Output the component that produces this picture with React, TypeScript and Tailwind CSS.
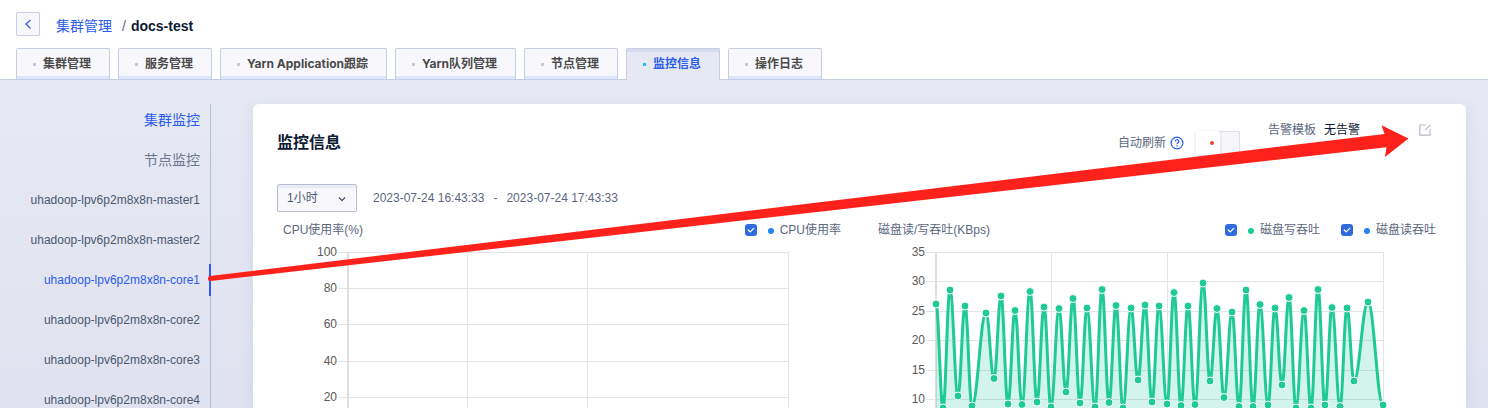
import React from "react";

const tabs = ["集群管理", "服务管理", "Yarn Application跟踪", "Yarn队列管理", "节点管理", "监控信息", "操作日志"];
const activeTab = "监控信息";

const nodes = [
  "uhadoop-lpv6p2m8x8n-master1",
  "uhadoop-lpv6p2m8x8n-master2",
  "uhadoop-lpv6p2m8x8n-core1",
  "uhadoop-lpv6p2m8x8n-core2",
  "uhadoop-lpv6p2m8x8n-core3",
  "uhadoop-lpv6p2m8x8n-core4",
];
const activeNode = "uhadoop-lpv6p2m8x8n-core1";

type Point = [number, number];

const writeSeries: Point[] = [
  [64, 64], [71, 168], [78, 50], [86, 156], [93, 66], [100, 166], [114, 73], [122, 138.5],
  [129, 56], [136, 164], [143, 70.5], [150, 164.5], [158, 51.5], [165, 162], [172, 67], [179, 167],
  [187, 68.5], [194, 152], [201, 58.5], [208, 163], [215, 68], [223, 167], [230, 49.5], [237, 162.5],
  [244, 65.5], [251, 168], [259, 68], [266, 140], [273, 65], [280, 162], [287, 66], [295, 164],
  [302, 52.5], [309, 165.5], [316, 66], [323, 164.5], [331, 43], [338, 141], [345, 68.5], [352, 157.5],
  [360, 72], [367, 166.5], [374, 50], [381, 166.5], [388, 64.5], [396, 165], [403, 68], [410, 145],
  [417, 57.5], [424, 168], [432, 70.5], [439, 168], [446, 49.5], [453, 165], [460, 67.5], [468, 166.5],
  [475, 68], [482, 141], [496, 62], [511, 165],
];

function smooth(points: Point[]) {
  return points
    .map(([x, y], i) => {
      if (i === 0) return `M${x} ${y}`;
      const [px, py] = points[i - 1];
      const d = (x - px) * 0.4;
      return `C${px + d} ${py} ${x - d} ${y} ${x} ${y}`;
    })
    .join(" ");
}

function Legend({ label, dot }: { label: string; dot: string }) {
  return (
    <label className="flex items-center">
      <span className="relative flex h-3 w-3">
        <input type="checkbox" defaultChecked className="h-3 w-3 appearance-none rounded-[3px] bg-[#2f6bdc]" />
        <svg className="pointer-events-none absolute inset-0" width="12" height="12" viewBox="0 0 12 12" fill="none" stroke="#fff" strokeWidth="1.3" strokeLinecap="round" strokeLinejoin="round">
          <path d="M3.2 6 5.2 7.9 8.8 4.4" />
        </svg>
      </span>
      <span className={`ml-[11px] mt-0.5 h-1.5 w-1.5 rounded-full ${dot}`} />
      <span className="ml-1.5">{label}</span>
    </label>
  );
}

function Axis({ ticks, step, left, right, columns }: { ticks: number[]; step: number; left: number; right: number; columns: number[] }) {
  return (
    <g>
      {ticks.map((t, i) => {
        const y = Math.round(12 + i * step) + 0.5;
        return (
          <g key={t}>
            <line x1={left - 9} x2={right} y1={y} y2={y} stroke="#e4e4e4" />
            <text x={left - 10} y={y + 3.5} textAnchor="end" fontSize="12" fill="#5a5a5a">{t}</text>
          </g>
        );
      })}
      <line x1={left + 1} x2={left + 1} y1="12" y2="260" stroke="#dedede" strokeWidth="2" />
      {columns.map((x) => (
        <line key={x} x1={x + 0.5} x2={x + 0.5} y1="12" y2="260" stroke="#e4e4e4" />
      ))}
    </g>
  );
}

export default function App() {
  const line = smooth(writeSeries);
  return (
    <div className="relative flex h-screen flex-col overflow-hidden bg-white font-['Liberation_Sans','Noto_Sans_CJK_SC',sans-serif] text-xs text-[#5b6780]">
      <header className="flex flex-col">
        <div className="flex h-12 items-center px-4">
          <button aria-label="返回" className="flex h-6 w-6 items-center justify-center rounded-xs border border-[#c6cee6] bg-[#f8f8fc]">
            <svg width="8" height="12" viewBox="0 0 8 12" fill="none" stroke="#2b5ced" strokeWidth="1.3"><path d="M6.5 2 2 6l4.5 4.5" /></svg>
          </button>
          <nav className="mt-1 ml-4 flex items-center text-sm">
            <a href="#clusters" className="text-[#2b5ced]">集群管理</a>
            <span className="ml-2.5">/</span>
            <h1 className="ml-[5px] font-bold text-[#0d1a33]">docs-test</h1>
          </nav>
        </div>
        <div className="flex h-8 items-end gap-2 border-b border-[#c6cee6] px-4 font-['Inter','Noto_Sans_CJK_SC',sans-serif]">
          {tabs.map((t) =>
            t === activeTab ? (
              <button key={t} className="-mb-px flex h-8 items-center gap-[7px] rounded-t-xs border border-b-0 border-[#c6cee6] bg-[#e6e9f3] pr-[18px] pb-px pl-4 font-bold text-[#2b5ced] shadow-[inset_0_3px_0_#d7dbec]">
                <span className="h-[3px] w-[3px] bg-[#22c3ee]" />{t}
              </button>
            ) : (
              <button key={t} className="flex h-[31px] items-center gap-[7px] rounded-t-xs border border-b-0 border-[#c6cee6] bg-[#f8f8fc] pr-[18px] pl-4 font-bold text-[#4a4a4a] shadow-[inset_0_-3px_0_#dde6fb]">
                <span className="h-[3px] w-[3px] bg-[#c8c8d2]" />{t}
              </button>
            ),
          )}
        </div>
      </header>

      <main className="flex min-h-0 flex-1 bg-linear-to-b from-[#e6e9f3] to-[#e0e3ef] pt-6 pr-[22px]">
        <nav className="w-[211px] shrink-0 border-r border-[#b6bed6] text-right text-[#4c5870]">
          <ul className="-mt-1">
            <li className="flex h-10 items-center justify-end pr-2.5 text-sm text-[#2b5ced]"><a href="#cluster">集群监控</a></li>
            <li className="flex h-10 items-center justify-end pr-2.5 text-sm text-[#6b7690]"><a href="#node">节点监控</a></li>
            {nodes.map((n) =>
              n === activeNode ? (
                <li key={n} className="-mr-px flex h-10 items-center">
                  <a href={`#${n}`} className="flex h-8 flex-1 items-center justify-end border-r-2 border-[#2b5ced] pr-[9px] text-[#2b5ced]">{n}</a>
                </li>
              ) : (
                <li key={n} className="flex h-10 items-center justify-end pr-2.5"><a href={`#${n}`}>{n}</a></li>
              ),
            )}
          </ul>
        </nav>

        <section className="ml-[42px] min-w-0 flex-1 rounded-t-md bg-white px-6 shadow-[0_4px_14px_rgba(120,135,180,0.16)]">
          <div className="flex h-20 items-start">
            <h2 className="mt-[27px] text-base font-bold text-[#0d1a33]">监控信息</h2>
            <div className="mt-[27px] ml-auto flex h-6 items-center">
              <span>自动刷新</span>
              <svg className="ml-1" width="14" height="14" viewBox="0 0 14 14" fill="none" stroke="#2b5ced" strokeWidth="1.2">
                <circle cx="7" cy="7" r="5.9" />
                <path d="M5.2 5.6a1.8 1.8 0 1 1 2.7 1.5c-.6.4-.9.6-.9 1.2M7 9.3v1.3" />
              </svg>
              <button role="switch" aria-checked="false" aria-label="自动刷新" className="ml-3 flex h-6 w-11 rounded-xs bg-[#f5f5fa] shadow-[inset_-1px_1px_0_#dcdfec]">
                <span className="flex h-6 w-6 items-center justify-center rounded-xs bg-white shadow-[0_1px_3px_rgba(120,135,190,0.35)]">
                  <span className="ml-2 h-1 w-1 rounded-full bg-[#fb3a3a]" />
                </span>
              </button>
            </div>
            <div className="mt-3.5 ml-7 flex h-6 items-center">
              <span>告警模板</span>
              <span className="ml-2 text-[#0d1a33]">无告警</span>
              <button aria-label="编辑" className="mr-[11px] ml-[59px]">
                <svg width="12" height="12" viewBox="0 0 12 12" fill="none" stroke="#b3bac9" strokeWidth="1.2" strokeLinejoin="round">
                  <path d="M6.5 1H.8v10.2h10.2V5.2M6 6.2 11.4.8" />
                </svg>
              </button>
            </div>
          </div>
          <div className="flex items-center">
            <span className="relative">
              <select aria-label="时间范围" className="h-7 w-20 appearance-none rounded-xs border border-[#b6bed6] bg-[#f8f8fc] pl-[9px] text-[#4c5870] shadow-[inset_0_3px_0_#ebebf2]">
                <option>1小时</option>
              </select>
              <svg className="pointer-events-none absolute top-2.5 right-2.5" width="10" height="10" viewBox="0 0 10 10" fill="none" stroke="#4c5870" strokeWidth="1.3"><path d="m2 3.5 3 3 3-3" /></svg>
            </span>
            <span className="ml-4">2023-07-24 16:43:33</span>
            <span className="mx-[9px]">-</span>
            <span>2023-07-24 17:43:33</span>
          </div>

          <div className="mt-2 grid grid-cols-2 gap-[25px]">
            <article>
              <div className="flex h-5 items-center px-1.5">
                <h3>CPU使用率(%)</h3>
                <div className="ml-auto"><Legend label="CPU使用率" dot="bg-[#2684f0]" /></div>
              </div>
              <svg className="h-[260px] w-full" role="img" aria-label="CPU使用率">
                <Axis ticks={[100, 80, 60, 40, 20]} step={36.2} left={70} right={512} columns={[190, 310, 511]} />
              </svg>
            </article>
            <article>
              <div className="flex h-5 items-center px-1.5">
                <h3>磁盘读/写吞吐(KBps)</h3>
                <div className="ml-auto flex gap-[21px]">
                  <Legend label="磁盘写吞吐" dot="bg-[#1fca97]" />
                  <Legend label="磁盘读吞吐" dot="bg-[#2684f0]" />
                </div>
              </div>
              <svg className="h-[260px] w-full" role="img" aria-label="磁盘读写吞吐">
                <Axis ticks={[35, 30, 25, 20, 15, 10]} step={29.4} left={63} right={512} columns={[179, 295, 511]} />
                <path d={`${line} V260 H64 Z`} fill="#1fca97" fillOpacity="0.2" />
                <path d={line} fill="none" stroke="#1fca97" strokeWidth="3" />
                {writeSeries.map(([x, y]) => (
                  <circle key={x} cx={x} cy={y} r="4" fill="#1fca97" stroke="#fff" />
                ))}
              </svg>
            </article>
          </div>
        </section>
      </main>

      <svg className="pointer-events-none absolute top-0 left-0" width="1488" height="408" viewBox="0 0 1488 408">
        <path d="M210 276 1384.5 134 1381.5 125.3 1408.5 138.5 1385 157 1386.5 147.3 210.5 281Q207.5 281 208 278.5 208 276.3 210 276Z" fill="#ff211c" />
      </svg>
    </div>
  );
}
